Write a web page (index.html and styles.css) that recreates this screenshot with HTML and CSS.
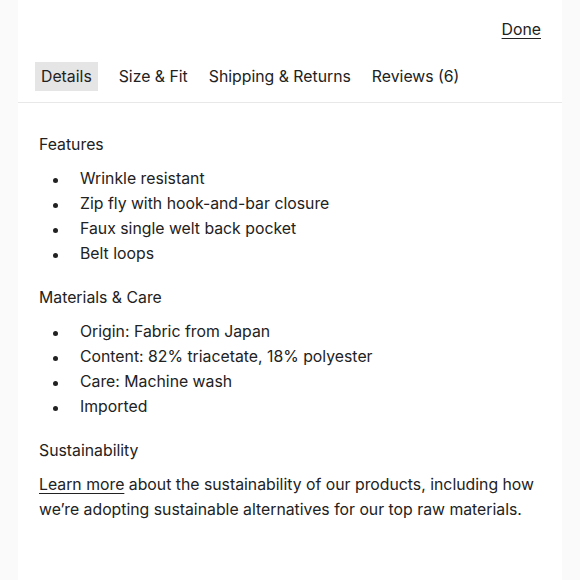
FILE: index.html
```html
<!DOCTYPE html>
<html>
<head>
<meta charset="utf-8">
<link rel="stylesheet" href="styles.css">
</head>
<body>
<div class="panel">
  <div class="top">
    <a class="done" href="#">Done</a>
  </div>
  <nav class="tabs">
    <span class="tab active">Details</span>
    <span class="tab">Size &amp; Fit</span>
    <span class="tab">Shipping &amp; Returns</span>
    <span class="tab">Reviews (6)</span>
  </nav>
  <div class="content">
    <h3 class="heading">Features</h3>
    <ul class="list">
      <li>Wrinkle resistant</li>
      <li>Zip fly with hook-and-bar closure</li>
      <li>Faux single welt back pocket</li>
      <li>Belt loops</li>
    </ul>
    <h3 class="heading">Materials &amp; Care</h3>
    <ul class="list">
      <li>Origin: Fabric from Japan</li>
      <li>Content: 82% triacetate, 18% polyester</li>
      <li>Care: Machine wash</li>
      <li>Imported</li>
    </ul>
    <h3 class="heading">Sustainability</h3>
    <p class="para"><a href="#" class="link">Learn more</a> about the sustainability of our products, including how we’re adopting sustainable alternatives for our top raw materials.</p>
  </div>
</div>
</body>
</html>
```

FILE: styles.css
```css
html, body {
  margin: 0;
  padding: 0;
  background: #fafafa;
}
body {
  font-family: Inter, "Noto Sans", sans-serif;
  font-size: 15.8px;
  color: #222;
}
.panel {
  margin: 0 18px;
  background: #fff;
  min-height: 580px;
}
.top {
  display: flex;
  justify-content: flex-end;
  padding: 18px 21px 0 0;
  height: 26px;
}
.done {
  color: #222;
  text-decoration: underline;
  text-underline-offset: 3px;
  line-height: 24px;
}
.tabs {
  display: flex;
  gap: 9px;
  margin-top: 18px;
  padding: 0 0 11px 17px;
  border-bottom: 1px solid #e8e8e8;
}
.tab {
  padding: 1px 6px 0;
  line-height: 28px;
  height: 28px;
}
.tab.active {
  background: #e5e5e5;
  margin-right: 6px;
}
.content {
  padding: 29px 21px 0 21px;
}
.heading {
  font-weight: normal;
  font-size: 15.8px;
  margin: 0 0 9px 0;
  line-height: 25px;
}
.list {
  list-style: none;
  margin: 0 0 19px 0;
  padding: 0;
}
.list li {
  line-height: 25px;
  padding-left: 41px;
  position: relative;
}
.list li::before {
  content: "";
  position: absolute;
  left: 14px;
  top: 12px;
  width: 5px;
  height: 5px;
  border-radius: 50%;
  background: #222;
}
.para {
  margin: 0;
  line-height: 25px;
}
.link {
  color: #222;
  text-decoration: underline;
  text-underline-offset: 3px;
}
```
